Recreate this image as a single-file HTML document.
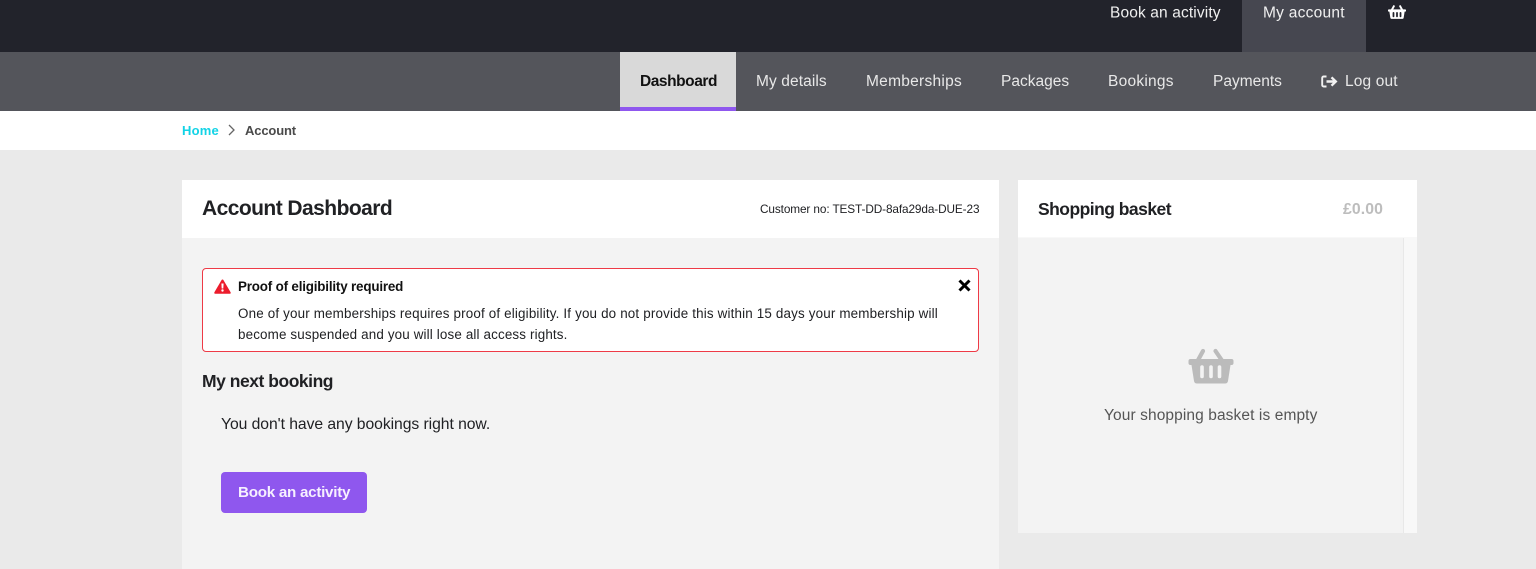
<!DOCTYPE html>
<html lang="en">
<head>
<meta charset="utf-8">
<title>Account Dashboard</title>
<style>
html,body{margin:0;padding:0}
html{background:#eaeaea}
body{width:1536px;height:569px;overflow:hidden;position:relative;background:#eaeaea;font-family:"Liberation Sans",sans-serif;color:#202124;filter:blur(.3px)}
.a{position:absolute;display:block}
.t{position:absolute;white-space:nowrap;line-height:20px}
svg{position:absolute;display:block}
</style>
</head>
<body>
<div class="a" style="left:0;top:0;width:1536px;height:52px;background:#22232b"></div>
<div class="a" style="left:1242px;top:0;width:124px;height:52px;background:#464750"></div>
<div class="t" style="left:1110px;top:3px;font-size:15.500px;letter-spacing:.13px;color:#f0f0f0;transform:translateY(.5px)">Book an activity</div>
<div class="t" style="left:1263px;top:3px;font-size:15.500px;letter-spacing:.25px;color:#f0f0f0;transform:translateY(.5px)">My account</div>
<svg style="left:1388px;top:5px" width="18" height="14.500" viewBox="0 0 46 37"><path d="M15 3L9 14M31 3l6 11" stroke="#fff" stroke-width="5" stroke-linecap="round" fill="none"/><path d="M2 11h42a2 2 0 0 1 2 2v2a2 2 0 0 1-2 2h-1.500L40 33a3 3 0 0 1-3 2.500H9A3 3 0 0 1 6 33L3.500 17H2a2 2 0 0 1-2-2v-2a2 2 0 0 1 2-2z" fill="#fff"/><path d="M14 20v9M23 20v9M32 20v9" stroke="#22232b" stroke-width="4.500" stroke-linecap="round"/></svg>

<div class="a" style="left:0;top:52px;width:1536px;height:59px;background:#54555b"></div>
<div class="a" style="left:620px;top:52px;width:116px;height:59px;background:#d9d9d9"></div>
<div class="a" style="left:620px;top:107px;width:116px;height:4px;background:#8f57ee"></div>
<div class="t" style="left:640px;top:72px;font-size:15.500px;letter-spacing:-.44px;font-weight:700;color:#111">Dashboard</div>
<div class="t" style="left:756px;top:72px;font-size:15.500px;letter-spacing:.1px;color:#e8e8e8">My details</div>
<div class="t" style="left:866px;top:72px;font-size:15.500px;letter-spacing:.27px;color:#e8e8e8">Memberships</div>
<div class="t" style="left:1001px;top:72px;font-size:15.500px;color:#e8e8e8">Packages</div>
<div class="t" style="left:1108px;top:72px;font-size:15.500px;letter-spacing:.25px;color:#e8e8e8">Bookings</div>
<div class="t" style="left:1213px;top:72px;font-size:15.500px;color:#e8e8e8">Payments</div>
<svg style="left:1321px;top:75px" width="17" height="13" viewBox="0 0 17 13"><path d="M5.500 1.500H2.700A1.500 1.500 0 0 0 1.200 3v7a1.500 1.500 0 0 0 1.500 1.500h2.800" fill="none" stroke="#f2f2f2" stroke-width="1.900"/><path d="M5.500 6.500h9M10.500 2.300l4.300 4.200-4.300 4.200" fill="none" stroke="#f2f2f2" stroke-width="2.400"/></svg>
<div class="t" style="left:1345px;top:72px;font-size:15.500px;letter-spacing:.15px;color:#e8e8e8">Log out</div>

<div class="a" style="left:0;top:111px;width:1536px;height:39px;background:#fff"></div>
<div class="t" style="left:182px;top:121px;font-size:13px;letter-spacing:.2px;font-weight:700;color:#12d3e6">Home</div>
<svg style="left:227px;top:124px" width="9" height="12" viewBox="0 0 9 12"><path d="M2 1l5 5-5 5" fill="none" stroke="#666" stroke-width="1.300"/></svg>
<div class="t" style="left:245px;top:121px;font-size:13px;letter-spacing:-.15px;font-weight:700;color:#4a4a4a">Account</div>

<div class="a" style="left:182px;top:180px;width:817px;height:389px;background:#f3f3f3"></div>
<div class="a" style="left:182px;top:180px;width:817px;height:58px;background:#fff"></div>
<div class="t" style="left:202px;top:199px;font-size:21px;letter-spacing:-.55px;font-weight:700;color:#202124">Account Dashboard</div>
<div class="t" style="left:760px;top:199px;font-size:11.800px;letter-spacing:-.11px;color:#202124">Customer no: TEST-DD-8afa29da-DUE-23</div>

<div class="a" style="left:202px;top:268px;width:775px;height:82px;background:#fff;border:1px solid #ee3a46;border-radius:4px"></div>
<svg style="left:214px;top:279px" width="17" height="15" viewBox="0 0 17 15"><path d="M8.500 0.500a1 1 0 0 1 .9.500l7.200 12.300a1 1 0 0 1-.9 1.500H1.300a1 1 0 0 1-.9-1.500L7.600 1a1 1 0 0 1 .9-.5z" fill="#ec1c2c"/><path d="M7.400 4.500h2.200l-.3 5H7.700z" fill="#fff"/><circle cx="8.500" cy="11.500" r="1.200" fill="#fff"/></svg>
<div class="t" style="left:238px;top:277px;font-size:13.400px;letter-spacing:-.18px;font-weight:700;color:#111">Proof of eligibility required</div>
<svg style="left:958px;top:279px" width="13" height="13" viewBox="0 0 13 13"><path d="M1.500 1.500l10 10M11.500 1.500l-10 10" stroke="#000" stroke-width="3"/></svg>
<div class="t" style="left:238px;top:304px;font-size:13.400px;letter-spacing:.17px;color:#202124">One of your memberships requires proof of eligibility. If you do not provide this within 15 days your membership will</div>
<div class="t" style="left:238px;top:325px;font-size:13.400px;letter-spacing:.15px;color:#202124">become suspended and you will lose all access rights.</div>

<div class="t" style="left:202px;top:371px;font-size:17.500px;letter-spacing:-.47px;font-weight:700;color:#202124">My next booking</div>
<div class="t" style="left:221px;top:415px;font-size:15.700px;letter-spacing:-.05px;color:#202124">You don't have any bookings right now.</div>
<div class="a" style="left:221px;top:472px;width:146px;height:41px;background:#8f57ee;border-radius:4px"></div>
<div class="t" style="left:238px;top:483px;font-size:15.200px;letter-spacing:-.27px;font-weight:700;color:#f6f0ff">Book an activity</div>

<div class="a" style="left:1018px;top:180px;width:399px;height:353px;background:#f8f8f8"></div>
<div class="a" style="left:1018px;top:238px;width:385px;height:295px;background:#f3f3f3;border-right:1px solid #e8e8e8"></div>
<div class="a" style="left:1018px;top:180px;width:399px;height:57px;background:#fff"></div>
<div class="t" style="left:1038px;top:199px;font-size:17.500px;letter-spacing:-.53px;font-weight:700;color:#202124">Shopping basket</div>
<div class="t" style="left:1343px;top:200px;font-size:15.800px;letter-spacing:.1px;font-weight:700;color:#bdbdbd">£0.00</div>
<svg style="left:1188px;top:348px" width="46" height="37" viewBox="0 0 46 37"><path d="M15 3L9 14M27.500 3L35 14" stroke="#bbb" stroke-width="4.200" stroke-linecap="round" fill="none"/><path d="M2.500 11h41a2 2 0 0 1 2 2v2a2 2 0 0 1-2 2h-1L40 33a3 3 0 0 1-3 2.500H9A3 3 0 0 1 6 33L3.500 17h-1a2 2 0 0 1-2-2v-2a2 2 0 0 1 2-2z" fill="#bbb"/><path d="M14 19v9.500M23 19v9.500M31.500 19v9.500" stroke="#f3f3f3" stroke-width="3.600" stroke-linecap="round"/></svg>
<div class="t" style="left:1104px;top:406px;font-size:15.500px;letter-spacing:.1px;color:#555">Your shopping basket is empty</div>
</body>
</html>
